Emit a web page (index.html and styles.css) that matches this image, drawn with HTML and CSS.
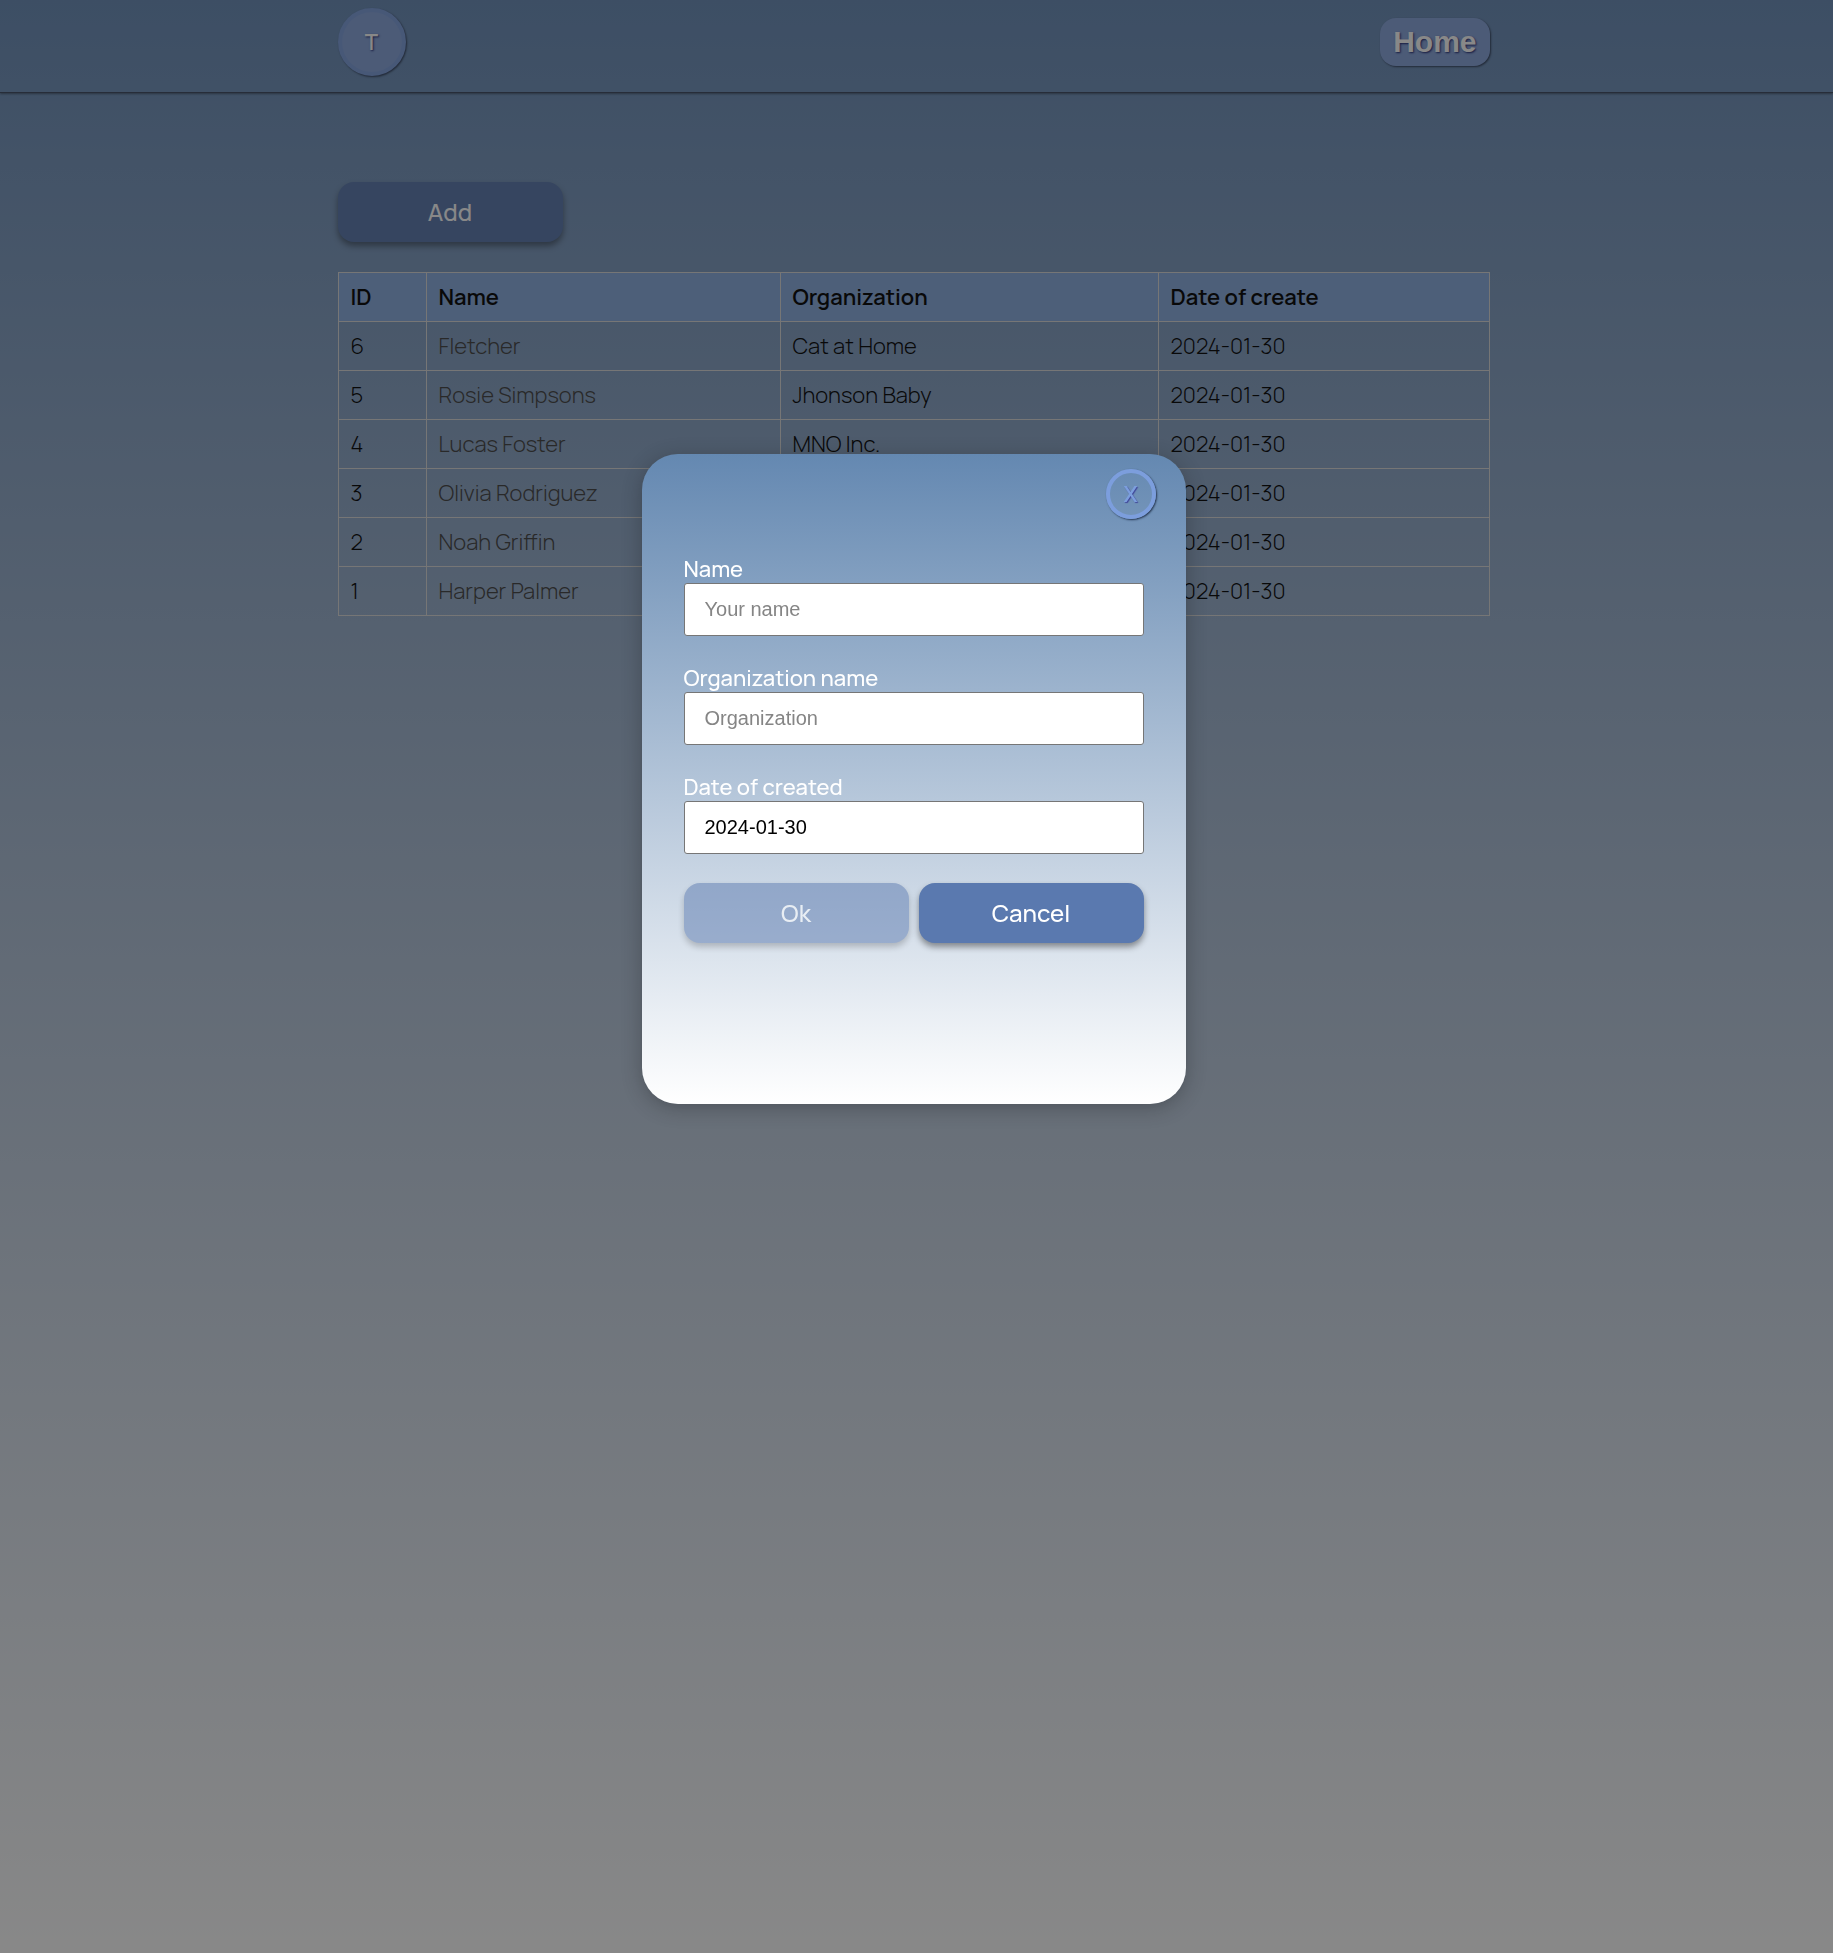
FILE: index.html
```html
<!DOCTYPE html>
<html lang="en">
<head>
<meta charset="utf-8">
<meta name="viewport" content="width=device-width, initial-scale=1">
<title>Organizations</title>
<link rel="stylesheet" href="styles.css">
</head>
<body>
<header class="header">
  <div class="container header-row">
    <a class="avatar" href="#">T</a>
    <a class="home" href="#">Home</a>
  </div>
</header>
<main class="main">
  <div class="container">
    <button class="button" type="button">Add</button>
    <table class="table">
      <thead>
        <tr><th class="col-id">ID</th><th class="col-name">Name</th><th class="col-org">Organization</th><th>Date of create</th></tr>
      </thead>
      <tbody>
        <tr><td>6</td><td><a href="#">Fletcher</a></td><td>Cat at Home</td><td>2024-01-30</td></tr>
        <tr><td>5</td><td><a href="#">Rosie Simpsons</a></td><td>Jhonson Baby</td><td>2024-01-30</td></tr>
        <tr><td>4</td><td><a href="#">Lucas Foster</a></td><td>MNO Inc.</td><td>2024-01-30</td></tr>
        <tr><td>3</td><td><a href="#">Olivia Rodriguez</a></td><td></td><td>2024-01-30</td></tr>
        <tr><td>2</td><td><a href="#">Noah Griffin</a></td><td></td><td>2024-01-30</td></tr>
        <tr><td>1</td><td><a href="#">Harper Palmer</a></td><td></td><td>2024-01-30</td></tr>
      </tbody>
    </table>
  </div>
</main>
<div class="overlay">
  <form class="modal" role="dialog" aria-label="Add organization">
    <button class="close" type="button" aria-label="Close">X</button>
    <div class="field">
      <label for="name">Name</label>
      <input id="name" type="text" placeholder="Your name">
    </div>
    <div class="field">
      <label for="organization">Organization name</label>
      <input id="organization" type="text" placeholder="Organization">
    </div>
    <div class="field">
      <label for="date">Date of created</label>
      <input id="date" type="text" value="2024-01-30">
    </div>
    <div class="actions">
      <button class="button" type="submit" disabled>Ok</button>
      <button class="button" type="button">Cancel</button>
    </div>
  </form>
</div>
</body>
</html>
```
FILE: styles.css
```css
* {
  box-sizing: border-box;
}

body {
  margin: 0;
  min-height: 100vh;
  font-family: Manrope, Inter, sans-serif;
  font-size: 22px;
  line-height: 24px;
  color: #000;
  background: linear-gradient(#688bb7, #fff);
}

.header,
.main,
.overlay {
  padding-right: 6px;
}

.container {
  width: 100%;
  max-width: 1152px;
  margin: 0 auto;
}

.header {
  padding-top: 8px;
  padding-bottom: 16px;
  border-bottom: 1px solid #3c4860;
  box-shadow: 0 1px 2px rgba(0, 0, 0, 0.4);
}

.header-row {
  display: flex;
  align-items: center;
  justify-content: space-between;
}

.avatar,
.home {
  color: #fff;
  text-decoration: none;
  text-shadow: 1px 1px 2px #1c2470;
  background: #86a4dc;
  box-shadow: 1px 1px 2px #30405c;
}

.avatar {
  display: flex;
  align-items: center;
  justify-content: center;
  width: 68px;
  height: 68px;
  border: 4px solid #7c9edd;
  border-radius: 50%;
  font-weight: 600;
}

.home {
  padding: 6px 13px;
  border-radius: 16px;
  font: bold 30px/36px "Liberation Sans", Arial, sans-serif;
}

.main {
  padding-top: 89px;
}

.button {
  width: 225px;
  height: 60px;
  padding: 0;
  border: 0;
  border-radius: 16px;
  font: 500 24px/30px Manrope, Inter, sans-serif;
  color: #fff;
  background: #5a79af;
  box-shadow: 0 4px 6px rgba(0, 0, 0, 0.4);
}

.button:disabled {
  opacity: 0.5;
}

.table {
  width: 100%;
  margin-top: 30px;
  table-layout: fixed;
  border-collapse: collapse;
}

.table th,
.table td {
  height: 49px;
  padding: 12px;
  border: 1px solid #dadada;
  text-align: left;
  font-weight: 300;
}

.table th {
  font-weight: 600;
  background: #88ace0;
}

.table a {
  color: #404040;
  text-decoration: none;
}

.col-id {
  width: 88px;
}

.col-name {
  width: 354px;
}

.col-org {
  width: 378px;
}

.overlay {
  position: fixed;
  inset: 0;
  display: flex;
  align-items: flex-start;
  justify-content: center;
  padding-top: 454px;
  background: rgba(18, 18, 18, 0.5);
}

.modal {
  display: flex;
  flex-direction: column;
  gap: 29px;
  width: 544px;
  padding: 15px 42px 161px;
  border-radius: 36px;
  background: linear-gradient(#6488b1, #fff);
  box-shadow: 0 4px 20px rgba(0, 0, 0, 0.25);
}

.close {
  align-self: flex-end;
  width: 50px;
  height: 50px;
  margin: 0 -12px 8px 0;
  padding: 0;
  border: 4px solid #7c9edd;
  border-radius: 50%;
  font: 600 22px/24px Manrope, Inter, sans-serif;
  color: #7c9edd;
  text-shadow: 1px 1px 1px #40489a;
  background: transparent;
  box-shadow: 1px 1px 2px #23344f;
}

.field {
  display: flex;
  flex-direction: column;
}

.field label {
  font-weight: 500;
  line-height: 27px;
  color: #fff;
}

.field input {
  width: 100%;
  height: 53px;
  padding: 0 20px;
  border: 1px solid #767676;
  border-radius: 3px;
  font: 20px/24px "Liberation Sans", Arial, sans-serif;
  color: #000;
  background: #fff;
}

.field input::placeholder {
  color: #858585;
}

.actions {
  display: flex;
  gap: 10px;
}
```
